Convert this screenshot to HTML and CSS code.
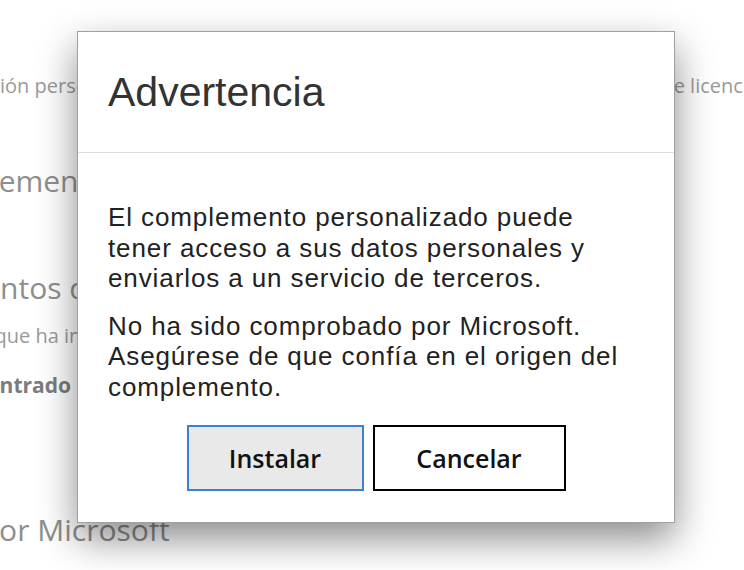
FILE: index.html
```html
<!DOCTYPE html>
<html lang="es">
<head>
    <meta charset="UTF-8">
    <meta name="viewport" content="width=device-width, initial-scale=1.0">
    <title>Advertencia</title>
    <link rel="stylesheet" href="styles.css">
</head>
<body>
    <div class="page">
        <div class="row small">
            <span class="info">Información personal</span>
            <span class="terms">Términos de licencia</span>
        </div>
        <div class="big custom">Complementos personalizados</div>
        <div class="big office">Complementos de Office</div>
        <div class="small mine">Complementos que ha instalado</div>
        <div class="small bold none">No se han encontrado</div>
        <div class="big admin">Administrado por Microsoft</div>
    </div>

    <div class="dialog">
        <div class="dialog-header">
            <h1>Advertencia</h1>
        </div>
        <div class="dialog-body">
            <p>El complemento personalizado puede tener acceso a sus datos personales y enviarlos a un servicio de terceros.</p>
            <p>No ha sido comprobado por Microsoft. Asegúrese de que confía en el origen del complemento.</p>
            <div class="buttons">
                <button class="primary">Instalar</button>
                <button>Cancelar</button>
            </div>
        </div>
    </div>
</body>
</html>
```

FILE: styles.css
```css
body {
    margin: 0;
    overflow: hidden;
    background: #fff;
    font-family: "Open Sans", "Noto Sans", sans-serif;
}
.page {
    color: #8e8e8e;
    white-space: nowrap;
}
.small {
    font-size: 20px;
    line-height: 26px;
    color: #9a9a9a;
}
.big {
    font-size: 30px;
    line-height: 38px;
}
.row {
    display: flex;
    margin-top: 73px;
}
.info {
    margin-left: -84px;
}
.terms {
    margin-left: auto;
    margin-right: -15px;
}
.custom {
    margin-top: 63px;
    margin-left: -92px;
}
.office {
    margin-top: 69px;
    margin-left: -152px;
}
.mine {
    margin-top: 16px;
    margin-left: -153px;
}
.none {
    margin-top: 23px;
    margin-left: -160px;
    font-size: 21px;
}
.bold {
    font-weight: 700;
    color: #7c7c7c;
}
.admin {
    margin-top: 113px;
    margin-left: -216px;
}
.dialog {
    position: absolute;
    left: 77px;
    top: 31px;
    width: 596px;
    height: 490px;
    background: #fff;
    border: 1px solid #a0a0a0;
    box-shadow: 0 16px 36px rgba(0, 0, 0, 0.45);
    font-family: "Liberation Sans", Arial, sans-serif;
}
.dialog-header {
    height: 120px;
    border-bottom: 1px solid #dedede;
    padding-left: 30px;
    display: flex;
    align-items: center;
}
h1 {
    margin: 0;
    font-size: 41px;
    font-weight: normal;
    color: #333;
}
.dialog-body {
    padding: 49px 30px 0 30px;
}
p {
    margin: 0 0 17px 0;
    font-size: 26px;
    line-height: 30.5px;
    letter-spacing: 0.9px;
    color: #222;
}
.buttons {
    display: flex;
    justify-content: center;
    gap: 9px;
    margin-top: 23px;
}
button {
    height: 66px;
    width: 193px;
    background: #fff;
    border: 2px solid #000;
    font-family: "Open Sans", "Noto Sans", sans-serif;
    font-size: 25px;
    font-weight: 600;
    color: #111;
}
button.primary {
    width: 177px;
    background: #e9e9e9;
    border-color: #3b7fd6;
}
```
